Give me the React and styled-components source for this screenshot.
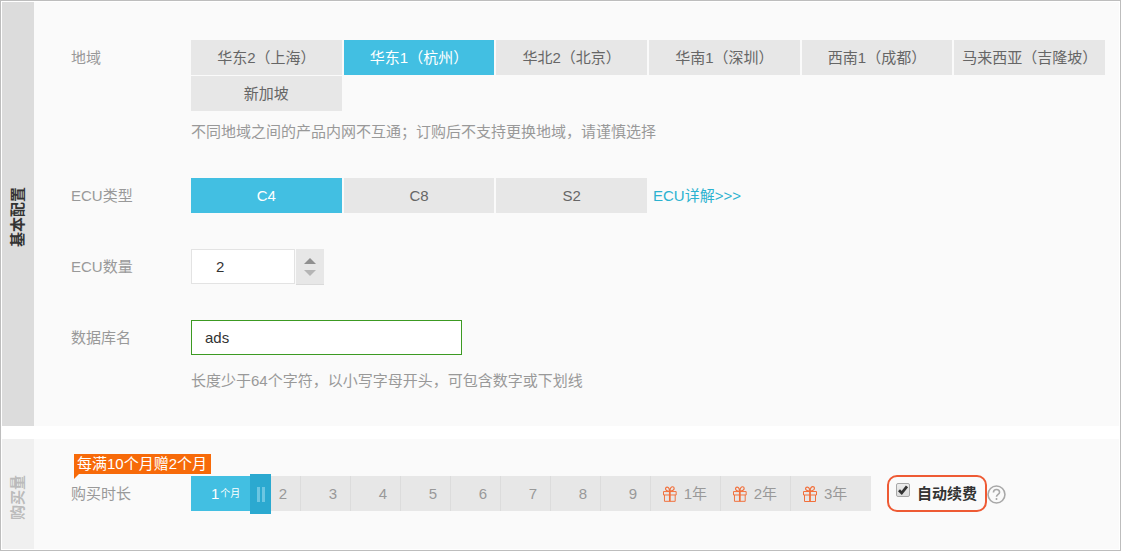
import React, { useState } from 'react';
import styled, { createGlobalStyle } from 'styled-components';

const GlobalStyle = createGlobalStyle`
    *, *::before, *::after {
        box-sizing: border-box;
    }

    body {
        margin: 0;
        background: #fff;
        color: #333;
        font-family: "Liberation Sans", "Noto Sans CJK SC", sans-serif;
        font-size: 15px;
        line-height: 21px;
    }

    button, input {
        font: inherit;
        color: inherit;
    }
`;

const Page = styled.main`
    display: flex;
    flex-direction: column;
    gap: 13px;
    padding: 1px;
    border: 1px solid #bdbdbd;
`;

const Section = styled.section`
    display: flex;
    background: #fafafa;
`;

const SectionTitle = styled.h2`
    display: flex;
    align-items: center;
    justify-content: center;
    width: 32px;
    margin: 0;
    padding-bottom: 6px;
    flex-shrink: 0;
    background: ${props => (props.$muted ? '#f0f0f0' : '#dcdcdc')};
    color: ${props => (props.$muted ? '#bbb' : '#333')};
    font-size: 15px;
    font-weight: bold;
    line-height: 32px;
    writing-mode: vertical-rl;
    text-orientation: sideways;
    transform: rotate(180deg);
`;

const SectionBody = styled.div`
    display: flex;
    flex-direction: column;
    flex: 1;
    gap: 36px;
    min-width: 0;
    padding: ${props => (props.$compact ? '37px 14px 38px 37px' : '38px 14px 34px 37px')};
`;

const Row = styled.div`
    display: flex;
    align-items: flex-start;
`;

const RowLabel = styled.label`
    width: 120px;
    flex-shrink: 0;
    color: #999;
    line-height: 35px;
`;

const Field = styled.div`
    flex: 1;
    min-width: 0;
`;

const Options = styled.div`
    display: grid;
    grid-template-columns: repeat(6, 1fr);
    gap: 1px 2px;
`;

const Option = styled.button`
    height: 35px;
    padding: 0;
    border: 0;
    background: ${props => (props.$active ? '#42bfe2' : '#e7e7e7')};
    color: ${props => (props.$active ? '#fff' : '#666')};
    white-space: nowrap;
    cursor: pointer;
`;

const DetailLink = styled.a`
    padding-left: 4px;
    color: #2cb2d0;
    line-height: 35px;
    text-decoration: none;
`;

const Hint = styled.p`
    margin: ${props => (props.$loose ? '15px 0 1px' : '10px 0 0')};
    color: #999;
`;

const Stepper = styled.div`
    display: flex;
    align-items: flex-start;
    gap: 1px;
    height: 35px;
`;

const CountInput = styled.input`
    width: 104px;
    height: 35px;
    padding: 0 24px;
    border: 1px solid #e3e3e3;
    background: #fff;
    outline: 0;
`;

const StepButtons = styled.div`
    display: flex;
    flex-direction: column;
    width: 28px;
    height: 36px;
    background: #e7e7e7;
    border-bottom: 1px solid #dadada;
`;

const StepButton = styled.button`
    display: flex;
    flex: 1;
    align-items: ${props => (props.$down ? 'flex-start' : 'flex-end')};
    justify-content: center;
    padding: 3px 0;
    border: 0;
    background: none;
    color: ${props => (props.$down ? '#b5b5b5' : '#909090')};
    cursor: pointer;
`;

const NameInput = styled.input`
    display: block;
    width: 271px;
    height: 35px;
    padding: 0 13px;
    border: 1px solid #3c9a22;
    background: #fff;
    outline: 0;
`;

const PromoLabel = styled.div`
    position: relative;
    width: 120px;
    flex-shrink: 0;
    color: #999;
    line-height: 35px;
`;

const Promo = styled.span`
    position: absolute;
    left: 3px;
    bottom: 37px;
    padding: 0 4px 0 3px;
    background: #f76a09;
    color: #fff;
    line-height: 20px;
    white-space: nowrap;

    &::after {
        content: "";
        position: absolute;
        top: 100%;
        left: 0;
        border-top: 5px solid #f76a09;
        border-right: 5px solid transparent;
    }
`;

const Duration = styled.div`
    position: relative;
    display: flex;
    height: 35px;
`;

const Segment = styled.span`
    position: relative;
    display: flex;
    align-items: center;
    justify-content: ${props => (props.$year || props.$active ? 'flex-start' : 'flex-end')};
    width: ${props => props.$width}px;
    padding: 0 13px 0 12px;
    padding-left: ${props => (props.$active && !props.$year ? '20px' : '12px')};
    gap: 7px;
    border-right: 1px solid ${props => (props.$active ? '#42bfe2' : '#dcdcdc')};
    background: ${props => (props.$active ? '#42bfe2' : '#e7e7e7')};
    color: ${props => (props.$active ? '#fff' : '#999')};
    white-space: nowrap;

    &:last-of-type {
        border-right-color: #e7e7e7;
    }

    small {
        margin-left: -6px;
        font-size: 10px;
    }
`;

const Handle = styled.i`
    position: absolute;
    z-index: 1;
    top: -2px;
    left: 100%;
    display: flex;
    align-items: center;
    justify-content: center;
    gap: 2px;
    width: 21px;
    height: 40px;
    background: #2ba9d0;

    &::before, &::after {
        content: "";
        width: 3px;
        height: 15px;
        background: #6cc6e2;
    }
`;

const DurationRange = styled.input`
    position: absolute;
    z-index: 2;
    inset: 0;
    width: 100%;
    height: 100%;
    margin: 0;
    opacity: 0;
    cursor: pointer;
`;

const Renew = styled.div`
    display: flex;
    align-items: center;
    height: 37px;
    margin: -1px 0 -1px 16px;
`;

const RenewLabel = styled.label`
    display: flex;
    gap: 7px;
    height: 37px;
    padding: 6px 8px 0 7px;
    border: 2px solid #ee5a34;
    border-radius: 10px;
    font-weight: bold;
    white-space: nowrap;
`;

const CheckBox = styled.span`
    position: relative;
    width: 14px;
    height: 14px;

    input {
        display: block;
        width: 14px;
        height: 14px;
        margin: 0;
        appearance: none;
        border: 1px solid #a8a8a8;
        border-radius: 2px;
        background: linear-gradient(#ededed, #dcdcdc);
    }

    svg {
        position: absolute;
        inset: 0;
        pointer-events: none;
    }

    input:not(:checked) + svg {
        display: none;
    }
`;

const HelpButton = styled.button`
    display: flex;
    padding: 2px 0 0;
    border: 0;
    background: none;
    color: #a8a8a8;
    cursor: pointer;
`;

const regions = ['华东2（上海）', '华东1（杭州）', '华北2（北京）', '华南1（深圳）', '西南1（成都）', '马来西亚（吉隆坡）', '新加坡'];
const ecuTypes = ['C4', 'C8', 'S2'];
const durations = [
    { text: '1', width: 60 },
    { text: '2', width: 50 },
    { text: '3', width: 50 },
    { text: '4', width: 50 },
    { text: '5', width: 50 },
    { text: '6', width: 50 },
    { text: '7', width: 50 },
    { text: '8', width: 50 },
    { text: '9', width: 50 },
    { text: '1年', width: 70, year: true },
    { text: '2年', width: 70, year: true },
    { text: '3年', width: 80, year: true },
];

const GiftIcon = () => (
    <svg width="14" height="16" viewBox="0 0 14 16" fill="none" stroke="#f2703c" aria-hidden="true">
        <path d="M.5 5.5h13v3.500H.5zM1.500 9v6.500h11V9" />
        <path d="M7 5.500v10" strokeWidth="1.800" />
        <path d="M6.800 5.200C4 5 2.400 4 2.600 2.400 2.900.5 5.400.6 6.300 2.600L7 5.200C7.200 3 8.200.6 9.900.6c1.800 0 2 2.200.7 3.300C9.600 4.700 8.200 5.100 7 5.200" strokeWidth="1.200" />
    </svg>
);

const HelpIcon = () => (
    <svg width="19" height="19" viewBox="0 0 18 18" fill="none" stroke="currentColor" strokeWidth="1.500" aria-hidden="true">
        <circle cx="9" cy="9" r="8" />
        <path d="M6.100 7.100c0-1.800 1.300-2.900 2.900-2.900s2.900 1 2.900 2.600c0 2-2.900 2.100-2.900 4.300M9 12.400v1.700" />
    </svg>
);

function App() {

    const [region, setRegion] = useState(1);
    const [ecuType, setEcuType] = useState(0);
    const [count, setCount] = useState(2);
    const [dbName, setDbName] = useState('ads');
    const [duration, setDuration] = useState(0);
    const [renew, setRenew] = useState(true);

    return (
        <>
            <GlobalStyle />
            <Page>
                <Section>
                    <SectionTitle>基本配置</SectionTitle>
                    <SectionBody>
                        <Row>
                            <RowLabel as="span" id="region">地域</RowLabel>
                            <Field>
                                <Options role="group" aria-labelledby="region">
                                    {regions.map((name, idx) => (
                                        <Option key={name} type="button" $active={idx === region} onClick={() => setRegion(idx)}>{name}</Option>
                                    ))}
                                </Options>
                                <Hint>不同地域之间的产品内网不互通；订购后不支持更换地域，请谨慎选择</Hint>
                            </Field>
                        </Row>
                        <Row>
                            <RowLabel as="span" id="ecuType">ECU类型</RowLabel>
                            <Field>
                                <Options role="group" aria-labelledby="ecuType">
                                    {ecuTypes.map((name, idx) => (
                                        <Option key={name} type="button" $active={idx === ecuType} onClick={() => setEcuType(idx)}>{name}</Option>
                                    ))}
                                    <DetailLink href="#ecu">ECU详解&gt;&gt;&gt;</DetailLink>
                                </Options>
                            </Field>
                        </Row>
                        <Row>
                            <RowLabel htmlFor="count">ECU数量</RowLabel>
                            <Stepper>
                                <CountInput id="count" value={count} onChange={e => setCount(Number(e.target.value) || 1)} />
                                <StepButtons>
                                    <StepButton type="button" aria-label="+" onClick={() => setCount(count + 1)}>
                                        <svg width="12" height="6"><path d="M6 0l6 6H0z" fill="currentColor" /></svg>
                                    </StepButton>
                                    <StepButton type="button" aria-label="-" $down onClick={() => setCount(Math.max(1, count - 1))}>
                                        <svg width="12" height="6"><path d="M0 0h12L6 6z" fill="currentColor" /></svg>
                                    </StepButton>
                                </StepButtons>
                            </Stepper>
                        </Row>
                        <Row>
                            <RowLabel htmlFor="dbName">数据库名</RowLabel>
                            <Field>
                                <NameInput id="dbName" value={dbName} onChange={e => setDbName(e.target.value)} />
                                <Hint $loose>长度少于64个字符，以小写字母开头，可包含数字或下划线</Hint>
                            </Field>
                        </Row>
                    </SectionBody>
                </Section>

                <Section>
                    <SectionTitle $muted>购买量</SectionTitle>
                    <SectionBody $compact>
                        <Row>
                            <PromoLabel>
                                <Promo>每满10个月赠2个月</Promo>
                                <label htmlFor="duration">购买时长</label>
                            </PromoLabel>
                            <Duration>
                                {durations.map((item, idx) => (
                                    <Segment key={item.text} $width={item.width} $year={item.year} $active={idx <= duration}>
                                        {item.year && <GiftIcon />}
                                        {item.text}
                                        {idx === duration && !item.year && <small>个月</small>}
                                        {idx === duration && <Handle />}
                                    </Segment>
                                ))}
                                <DurationRange
                                    id="duration"
                                    type="range"
                                    min="0"
                                    max={durations.length - 1}
                                    value={duration}
                                    onChange={e => setDuration(Number(e.target.value))}
                                />
                            </Duration>
                            <Renew>
                                <RenewLabel>
                                    <CheckBox>
                                        <input type="checkbox" checked={renew} onChange={e => setRenew(e.target.checked)} />
                                        <svg width="14" height="14" viewBox="0 0 14 14" fill="none" stroke="#333" strokeWidth="2.800">
                                            <path d="M3 7.300l2.700 2.700L11 3.300" />
                                        </svg>
                                    </CheckBox>
                                    自动续费
                                </RenewLabel>
                                <HelpButton type="button" aria-label="?"><HelpIcon /></HelpButton>
                            </Renew>
                        </Row>
                    </SectionBody>
                </Section>
            </Page>
        </>
    );
}

export default App
